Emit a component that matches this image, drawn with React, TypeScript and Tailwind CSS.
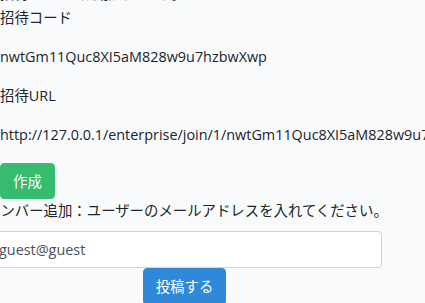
import React from "react";

export default function App() {
  const font = {
    fontFamily:
      '"Open Sans", "Noto Sans CJK JP", sans-serif',
  };
  return (
    <div
      className="h-[303px] w-[425px] overflow-hidden bg-[#f8fafc] text-[14.4px] leading-[1.6] text-[#212529]"
      style={font}
    >
      <div className="mt-[-17px] whitespace-nowrap">
        <div className="h-[23px] leading-[21px]">招待コードで追加できます。</div>
        <p className="mb-4">招待コード</p>
        <p className="mb-4">nwtGm11Quc8XI5aM828w9u7hzbwXwp</p>
        <p className="mb-4">招待URL</p>
        <p className="mb-4">
          http://127.0.0.1/enterprise/join/1/nwtGm11Quc8XI5aM828w9u7hzbwXwp
        </p>
        <button className="mt-px h-[36px] rounded-[4px] border border-[#35bc6e] bg-[#35bc6e] px-3 text-white">
          作成
        </button>
        <div className="ml-[-14px] w-[397px]">
          <div className="mb-[9px]">メンバー追加：ユーザーのメールアドレスを入れてください。</div>
          <input
            className="block h-[37px] w-[396px] rounded-[4px] border border-[#ced4da] bg-white px-3 text-[#495057] outline-none"
            defaultValue="guest@guest"
          />
          <div className="flex justify-center">
            <button className="h-[37px] rounded-[4px] border border-[#3088d9] bg-[#3088d9] px-3 text-white">
              投稿する
            </button>
          </div>
        </div>
      </div>
    </div>
  );
}
